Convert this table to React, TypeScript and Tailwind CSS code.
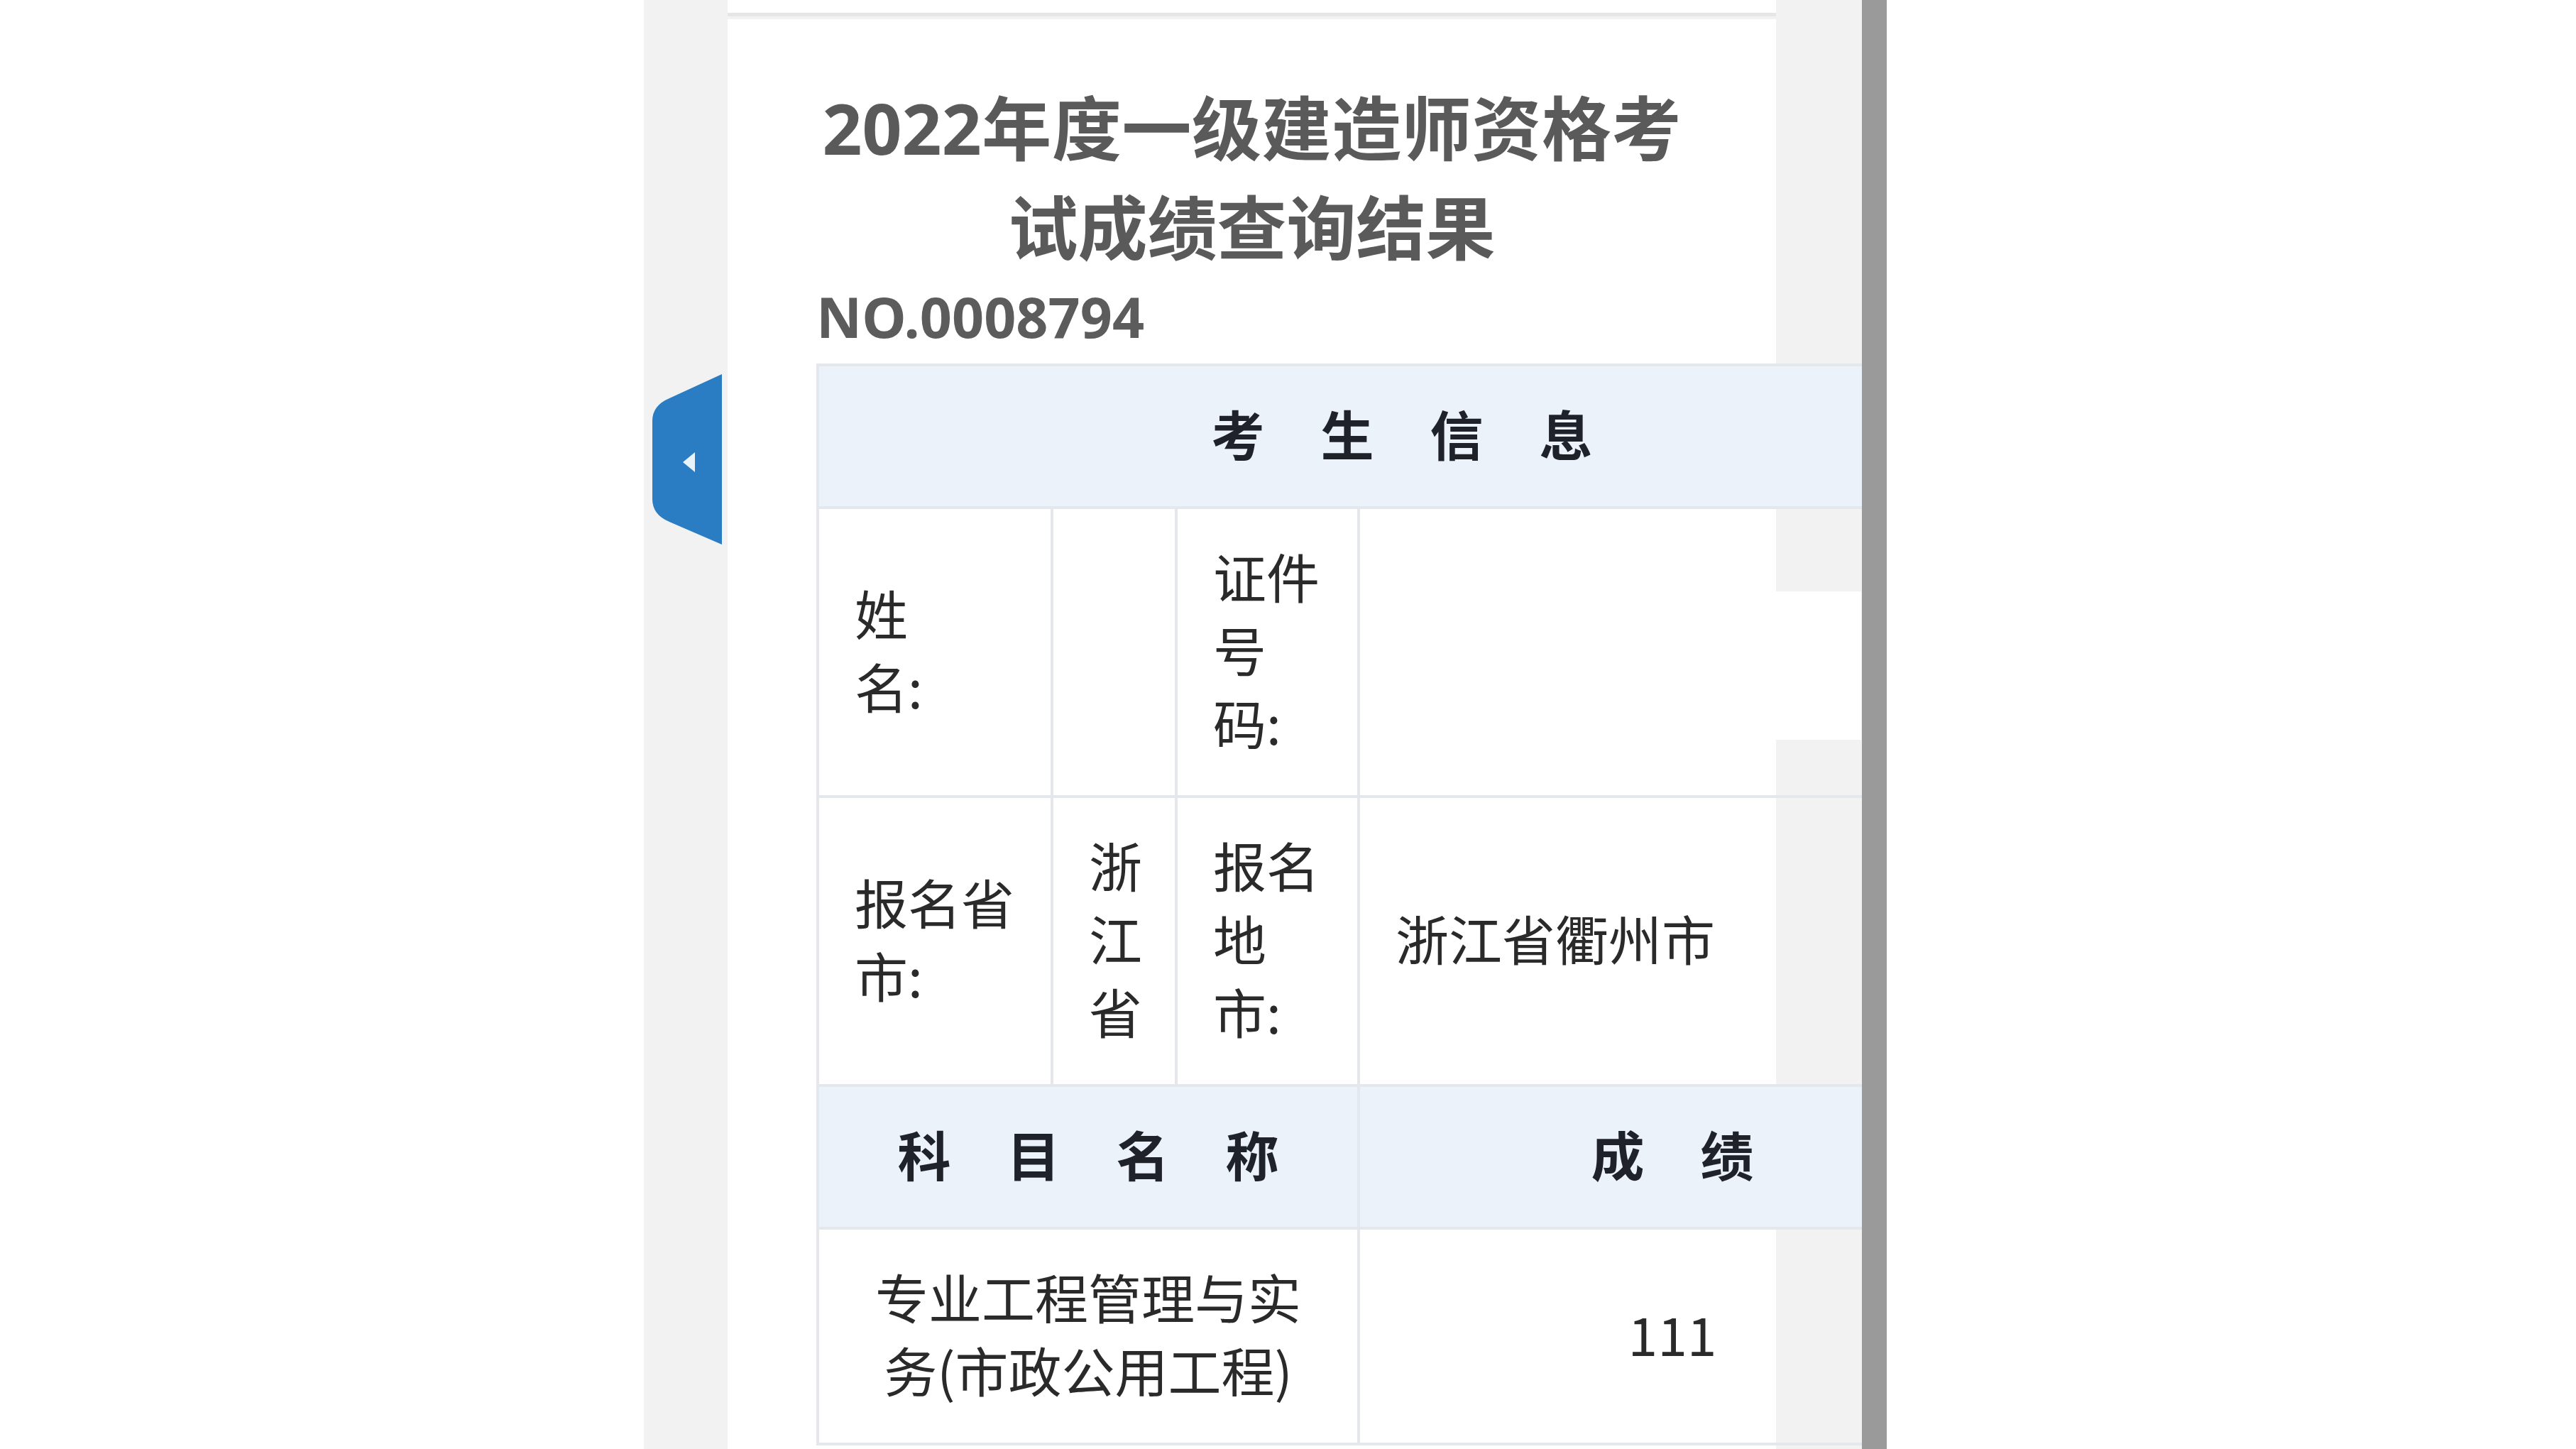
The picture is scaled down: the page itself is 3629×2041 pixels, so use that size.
import React from "react";

const cjk = { fontFamily: '"Noto Sans", "Noto Sans CJK SC", sans-serif' };

function Spaced({ chars }: { chars: string[] }) {
  return (
    <div className="flex justify-center gap-[79px]">
      {chars.map((c, i) => (
        <span key={i}>{c}</span>
      ))}
    </div>
  );
}

function Tab() {
  return (
    <svg width="100" height="240" viewBox="0 0 100 240" className="absolute left-[10px] top-[527px]">
      <path d="M100 0 L100 240 L26 208 Q2 198 2 176 L2 66 Q2 44 26 34 Z" fill="#2a7cc3" />
      <path d="M45 124 L62 110 L62 138 Z" fill="#e8f3fb" />
    </svg>
  );
}

export default function App() {
  const td = "border-r-4 border-b-4 border-[#e4e7eb] px-[50px] pt-[42px] pb-[52px] align-middle";
  const th = "border-r-4 border-b-4 border-[#e4e7eb] bg-[#ecf2f9] pt-[42px] pb-[52px] align-middle font-bold text-[#1f2329]";
  return (
    <div className="w-[3629px] h-[2041px] bg-white flex overflow-hidden" style={cjk}>
      <div className="ml-[907px] w-[1716px] h-full bg-[#f2f2f2] relative overflow-hidden flex">
        <div className="w-[118px] shrink-0 relative">
          <Tab />
        </div>
        <div className="w-[1477px] shrink-0 flex flex-col">
          <div className="h-[23px] bg-white border-b-[5px] border-[#e6e6e6] shrink-0" />
          <div className="mt-[4px] bg-white flex-1 pt-[83px] px-[125px] relative">
            <h1 className="text-[98px] leading-[140px] font-bold text-[#5a5a5a]">
              <span className="block w-[1210px] mx-auto text-justify [text-align-last:justify]">
                2022年度一级建造师资格考
              </span>
              <span className="block text-center">试成绩查询结果</span>
            </h1>
            <div className="text-[79px] leading-[112px] font-bold text-[#5c5c5c]" style={{ fontFamily: '"Noto Sans", sans-serif' }}>
              NO.0008794
            </div>
            <table
              className="mt-[10px] w-[1650px] max-w-none table-fixed border-separate border-spacing-0 border-l-4 border-t-4 border-[#e4e7eb] text-[75px] leading-[103px] text-[#2a2a2a]"
              style={{ fontFamily: '"Noto Sans CJK SC", sans-serif' }}
            >
              <colgroup>
                <col className="w-[330px]" />
                <col className="w-[175px]" />
                <col className="w-[257px]" />
                <col className="w-[884px]" />
              </colgroup>
              <tbody>
                <tr>
                  <td colSpan={4} className={th}>
                    <Spaced chars={["考", "生", "信", "息"]} />
                  </td>
                </tr>
                <tr>
                  <td className={td}>
                    姓<br />名:
                  </td>
                  <td className={td}></td>
                  <td className={td}>
                    证件<br />号<br />码:
                  </td>
                  <td className={td}></td>
                </tr>
                <tr>
                  <td className={td}>
                    报名省<br />市:
                  </td>
                  <td className={td}>
                    浙<br />江<br />省
                  </td>
                  <td className={td}>
                    报名<br />地<br />市:
                  </td>
                  <td className={td}>浙江省衢州市</td>
                </tr>
                <tr>
                  <td colSpan={3} className={th}>
                    <Spaced chars={["科", "目", "名", "称"]} />
                  </td>
                  <td className={th}>
                    <Spaced chars={["成", "绩"]} />
                  </td>
                </tr>
                <tr>
                  <td colSpan={3} className={td + " text-center"}>
                    专业工程管理与实务(市政公用工程)
                  </td>
                  <td className={td + " text-center"}>111</td>
                </tr>
              </tbody>
            </table>
          </div>
        </div>
        <div className="absolute left-[1595px] top-[833px] w-[120px] h-[209px] bg-white" />
      </div>
      <div className="w-[35px] h-full bg-[#9a9a9a] shrink-0" />
    </div>
  );
}
